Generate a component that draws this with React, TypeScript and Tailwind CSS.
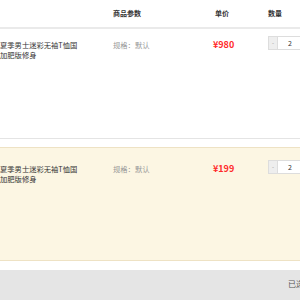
import React from 'react'

interface Item {
  id: number
  title: string[]
  spec: string
  price: string
  qty: number
  selected: boolean
}

const items: Item[] = [
  { id: 1, title: ['夏季男士迷彩无袖T恤国', '加肥版修身'], spec: '规格：默认', price: '¥980', qty: 2, selected: false },
  { id: 2, title: ['夏季男士迷彩无袖T恤国', '加肥版修身'], spec: '规格：默认', price: '¥199', qty: 2, selected: true },
]

function QtyBox({ qty }: { qty: number }) {
  return (
    <div className="flex h-[14px]">
      <div className="w-[10px] shrink-0 h-full bg-[#eeeeee] border border-[#dddddd] text-[#999] text-[6px] leading-[12px] text-center">
        -
      </div>
      <div className="w-[30px] shrink-0 h-full bg-white border border-l-0 border-[#dddddd] text-[#333] text-[7px] leading-[12px] pl-[10px]">
        {qty}
      </div>
    </div>
  )
}

export default function App() {
  return (
    <div
      className="w-[300px] h-[300px] overflow-hidden bg-white flex flex-col"
      style={{ fontFamily: '"Noto Sans CJK SC", "Noto Sans", sans-serif' }}
    >
      {/* Table header */}
      <div className="flex h-[29px] shrink-0 border-b-2 border-[#eaeaea] text-[7px] font-bold text-[#333] items-center pb-[1px]">
        <div className="w-[113px] shrink-0" />
        <div className="w-[100px] shrink-0">商品参数</div>
        <div className="w-[55px] shrink-0 pl-[2px]">单价</div>
        <div className="flex-1">数量</div>
      </div>

      {/* Cart rows */}
      {items.map((item) => (
        <div
          key={item.id}
          className={
            item.selected
              ? 'flex h-[114px] shrink-0 mt-[8px] pt-[16px] bg-[#fcf6e3] border-t border-b border-[#eee2c4]'
              : 'flex h-[110px] shrink-0 pt-[11px] bg-white border-b border-[#e4e4e4]'
          }
        >
          <div className="w-[113px] shrink-0 text-[7.3px] leading-[10px] text-[#333] whitespace-nowrap">
            {item.title.map((line) => (
              <div key={line}>{line}</div>
            ))}
          </div>
          <div className="w-[100px] shrink-0 text-[7.3px] leading-[10px] text-[#999]">{item.spec}</div>
          <div className="w-[55px] shrink-0 text-[9px] leading-[10px] font-bold text-[#ff2a2a]">{item.price}</div>
          <div className="shrink-0 -mt-[4px]">
            <QtyBox qty={item.qty} />
          </div>
        </div>
      ))}

      {/* Footer bar */}
      <div className="mt-[9px] flex-1 bg-[#e5e5e5] flex justify-end items-center pb-[2px]">
        <span className="text-[8px] text-[#555] whitespace-nowrap -mr-[4px]">已选</span>
      </div>
    </div>
  )
}
